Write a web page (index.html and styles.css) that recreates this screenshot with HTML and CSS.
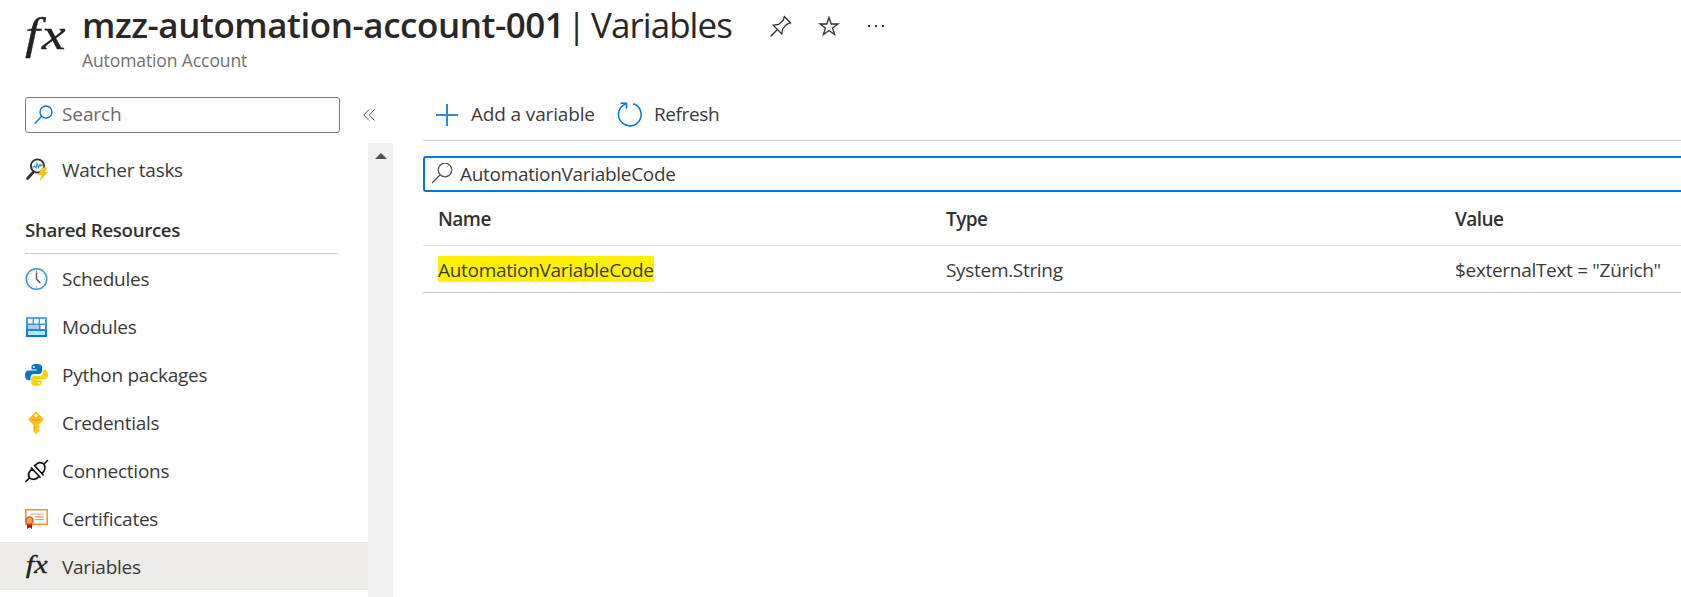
FILE: index.html
```html
<!DOCTYPE html>
<html lang="en">
<head>
<meta charset="utf-8">
<title>mzz-automation-account-001 | Variables</title>
<link rel="stylesheet" href="styles.css">
</head>
<body>
<header class="header">
  <svg class="header-icon" viewBox="0 0 46 46"><text class="fx fx-large" transform="translate(2 35) scale(1.220 1)">fx</text></svg>
  <div class="headings">
    <div class="title-row">
      <h1 class="title"><span class="title-name">mzz-automation-account-001</span><span class="title-bar">|</span><span class="title-page">Variables</span></h1>
      <div class="title-actions">
        <svg width="24" height="24" viewBox="0 0 24 24" fill="none" stroke="#323130" stroke-width="1.3"><path d="M1.500 22.500 8 16M14.800 2 22 9.200M15.500 2.800 14 6.500 9.500 10.500 4.200 11.300 12.800 20 13.700 14.700 17.700 10.300 21.500 8.800Z"/></svg>
        <svg width="24" height="24" viewBox="0 0 24 24" fill="none" stroke="#323130" stroke-width="1.3"><path d="M12 3.500 14.200 10H21L15.500 13.900 17.600 20.500 12 16.500 6.400 20.500 8.500 13.900 3 10H9.800Z"/></svg>
        <svg width="24" height="24" viewBox="0 0 24 24" fill="#323130"><path d="M3 11h2v2H3zM10 11h2v2h-2zM17 11h2v2h-2z"/></svg>
      </div>
    </div>
    <div class="subtitle">Automation Account</div>
  </div>
</header>
<div class="body">
  <aside class="sidebar">
    <div class="search-row">
      <div class="search">
        <svg width="20" height="20" viewBox="0 0 20 20" fill="none" stroke="#0078d4" stroke-width="1.4"><circle cx="12" cy="7" r="6"/><path d="M7.700 11.300 .8 18.500"/></svg>
        <span>Search</span>
      </div>
      <svg class="collapse" width="12" height="12" viewBox="0 0 12 12" fill="none" stroke="#555" stroke-width="1"><path d="M6 .5.8 6 6 11.500M11.500.5 6.300 6l5.200 5.500"/></svg>
    </div>
    <div class="nav-wrap">
      <nav class="nav">
        <a class="item"><svg class="icon" viewBox="0 0 24 24"><path d="M3.500 21.500 9 15.500" stroke="#323130" stroke-width="2.800" stroke-linecap="round"/><circle cx="13.500" cy="9" r="6.700" fill="#eef7fc" stroke="#323130" stroke-width="1.800"/><path d="M8.500 10.500 10.500 9 12 11 13 6.500 14.500 10.500 16 7.500 17 9 18.500 7.500" fill="none" stroke="#2b8ccc" stroke-width="1.100"/><path d="M18 10.500h5.500L20.500 15H24l-8.500 9.300 2-6.300H14Z" fill="#fdc50f"/></svg><span>Watcher tasks</span></a>
        <h2 class="group">Shared Resources</h2>
        <a class="item"><svg class="icon" viewBox="0 0 24 24"><circle cx="12.500" cy="13" r="10.300" fill="#fff" stroke="#3d94e0" stroke-width="1.500"/><path d="M12.500 4.500v1.600M12.500 20v1.600M4 13h1.600M19.500 13H21M6.500 7l1 1M18.500 7l-1 1M6.500 19l1-1" stroke="#999" stroke-width=".9"/><path d="M12.500 6.500V13l3.800 4" fill="none" stroke="#555" stroke-width="1.400"/></svg><span>Schedules</span></a>
        <a class="item"><svg class="icon" viewBox="0 0 24 24"><defs><linearGradient id="mod" x2="0" y2="1"><stop stop-color="#5ea0ef"/><stop offset="1" stop-color="#0078d4"/></linearGradient></defs><path d="M2 3h21v20H2z" fill="url(#mod)"/><path d="M4 5h4.500v4.500H4zM10 5h4.500v4.500H10zM16 5h5v4.500h-5zM16.500 11H21v4h-4.500z" fill="#fff"/><path d="M4 11h11v4H4z" fill="#a9cdf5"/><path d="M4 17h17v4H4z" fill="#b5e3fa"/></svg><span>Modules</span></a>
        <a class="item"><svg class="icon" viewBox="0 0 24 24"><path d="M12.400 2C8.500 2 7.500 3.300 7.500 5v2.500h5.300v1H4.600C2.300 8.500 1 10.400 1 13.200s1.300 5 3.200 5h2.300v-2.700c0-2 1.600-3.500 3.500-3.500h5.200c1.700 0 2.800-1.300 2.800-2.900V5c0-1.800-1.500-3-5.600-3Z" fill="#0078c8"/><path d="M12.600 24c3.900 0 5-1.300 5-3v-2.500h-5.300v-1h8.200c2.300 0 3.500-1.900 3.500-4.700s-1.300-5-3.200-5h-2v2.900c0 2-1.600 3.300-3.500 3.300h-5.200c-1.700 0-2.800 1.300-2.800 2.900V21c0 1.800 1.200 3 5.300 3Z" fill="#fdd215"/><circle cx="9.800" cy="4.900" r="1" fill="#fff"/><circle cx="15.200" cy="21.100" r="1" fill="#fff"/></svg><span>Python packages</span></a>
        <a class="item"><svg class="icon" viewBox="0 0 24 24"><defs><linearGradient id="key" x2="0" y2="1"><stop stop-color="#feb41b"/><stop offset="1" stop-color="#ffd015"/></linearGradient></defs><path d="M10.800 2.500a1.600 1.600 0 0 1 2.400 0L18.700 8a2 2 0 0 1 0 2.700L14.600 15l1 1v1.500l-1 1 1 1v1.300L12.500 24h-1L9.300 21.700V15L5.300 10.700a2 2 0 0 1 0-2.700Z" fill="url(#key)"/><circle cx="12" cy="5.500" r="1.600" fill="#fff"/><path d="M7.500 9.200h9v1.300h-9z" fill="#f29a10"/><path d="M10.600 15.500v5.500" stroke="#f2a510" stroke-width=".9"/></svg><span>Credentials</span></a>
        <a class="item"><svg class="icon" viewBox="0 0 24 24" fill="none" stroke="#111" stroke-width="1.700" stroke-linecap="round"><path d="M2 23.300 5.500 20M20 6l3.500-3.500M7.500 10l8.500 9.300M10.500 7.500l8.500 9.300M8.300 11c-3.500 2.300-5 5-2.800 9 4 2.300 7.500 1.500 9.500-2M11 8C13.500 4 16.500 3.700 20 6c2 4 .8 7-2 9.500"/></svg><span>Connections</span></a>
        <a class="item"><svg class="icon" viewBox="0 0 24 24"><path d="M1.800 3.800h21.400v14.400H1.800z" fill="#fff" stroke="#eb9330" stroke-width="1.500"/><path d="M6 8h14M11 10.800h9M11 13.500h9" stroke="#eda066" stroke-width="1.200"/><path d="M3 16h5v7l-2.500-1.500L3 23Z" fill="#b5161b"/><circle cx="5.500" cy="14.500" r="3.600" fill="#fba63a" stroke="#e8583a" stroke-width="1.500"/></svg><span>Certificates</span></a>
        <a class="item selected"><svg class="icon" viewBox="0 0 24 24"><text class="fx fx-small" transform="translate(1.800 19) scale(1.220 1)">fx</text></svg><span>Variables</span></a>
      </nav>
      <div class="scrollbar"><svg width="12" height="6" viewBox="0 0 12 6"><path d="M0 6 6 0l6 6Z" fill="#505050"/></svg></div>
    </div>
  </aside>
  <main class="main">
    <div class="toolbar">
      <svg width="24" height="24" viewBox="0 0 24 24" stroke="#2b8bda" stroke-width="2"><path d="M12 1v22M1 12h22"/></svg>
      <span class="add">Add a variable</span>
      <svg width="26" height="26" viewBox="0 0 26 26" fill="none" stroke="#0078d4" stroke-width="1.500"><path d="M16.300 1.800A11.300 11.300 0 1 1 6.500 3.200L9.500 1.300M3.500 1.300h6v5.500"/></svg>
      <span class="refresh">Refresh</span>
    </div>
    <div class="filter">
      <svg width="22" height="22" viewBox="0 0 22 22" fill="none" stroke="#555" stroke-width="1.300"><circle cx="14" cy="7" r="6.800"/><path d="M9.200 11.800 1 20"/></svg>
      <span>AutomationVariableCode</span>
    </div>
    <div class="row head"><span>Name</span><span>Type</span><span>Value</span></div>
    <div class="row data"><span><mark>AutomationVariableCode</mark></span><span>System.String</span><span>$externalText = "Zürich"</span></div>
  </main>
</div>
</body>
</html>
```
FILE: styles.css
```css
* { box-sizing: border-box; }
body {
  margin: 0;
  height: 597px;
  overflow: hidden;
  background: #fff;
  color: #3b3a39;
  font: 400 19px/26px "Open Sans", "Noto Sans", sans-serif;
  letter-spacing: -.31px;
}
svg { display: block; flex: none; }
h1, h2 { margin: 0; }

.fx { font-family: "Liberation Serif", serif; font-style: italic; font-weight: 400; fill: #222; stroke: #222; stroke-width: .3px; }
.fx-large { font-size: 44px; letter-spacing: 1.500px; }
.fx-small { font-size: 25px; letter-spacing: 0; }

.header { display: flex; height: 97px; padding: 0 0 0 23px; }
.header-icon { width: 46px; height: 46px; margin-top: 14px; overflow: visible; }
.headings { padding-left: 13px; }
.title-row { display: flex; height: 50px; align-items: center; }
.title { display: flex; font-size: 35px; line-height: 50px; font-weight: 400; white-space: nowrap; color: #292827; }
.title-name { width: 485px; font-weight: 600; letter-spacing: -.45px; }
.title-bar { width: 24px; letter-spacing: 0; }
.title-page { width: 178px; letter-spacing: -.95px; }
.title-actions { display: flex; gap: 24px; padding-top: 2px; }
.subtitle { margin-top: -2px; font-size: 17.500px; line-height: 24px; color: #72706e; letter-spacing: -.1px; }

.body { display: flex; height: 500px; }
.sidebar { display: flex; flex-direction: column; width: 393px; }
.search-row { display: flex; align-items: center; height: 36px; padding-left: 25px; gap: 23px; margin-bottom: 10px; }
.search { display: flex; align-items: center; width: 315px; height: 36px; padding-left: 8px; gap: 8px; border: 1px solid #7a7876; border-radius: 3px; color: #6b6967; letter-spacing: -.1px; }
.search span { padding-bottom: 2px; }
.nav-wrap { display: flex; flex: 1; }
.nav { width: 368px; padding-top: 2px; letter-spacing: -.27px; }
.item { display: flex; align-items: center; height: 48px; padding-left: 24px; gap: 14px; }
.icon { width: 24px; height: 24px; overflow: visible; }
.item span { padding-top: 1px; }
.selected { background: #edebe9; }
.group { width: 313px; height: 61px; margin-left: 25px; padding-top: 24px; border-bottom: 1px solid #c8c8c8; color: #323130; font-size: 18.700px; font-weight: 600; letter-spacing: -.35px; }
.scrollbar { display: flex; justify-content: center; width: 25px; padding-top: 10px; background: #f0f0f0; }

.main { flex: 1; padding-left: 30px; }
.toolbar { display: flex; align-items: center; height: 44px; padding: 0 0 8px 12px; border-bottom: 1px solid #d2d0ce; white-space: nowrap; letter-spacing: -.15px; }
.toolbar span { padding-bottom: 2px; }
.add { width: 158px; padding-left: 12px; }
.refresh { padding-left: 11px; letter-spacing: -.4px; }
.filter { display: flex; align-items: center; height: 36px; margin: 15px -4px 0 0; padding-left: 6px; gap: 7px; border: 2.500px solid #0078d4; border-radius: 3px; }
.row { display: grid; grid-template-columns: 508px 509px 1fr; padding-left: 15px; white-space: nowrap; }
.head { height: 54px; padding-top: 14px; border-bottom: 1px solid #e8e8e8; color: #323130; font-weight: 600; letter-spacing: -.55px; }
.data { height: 47px; padding-top: 10px; border-bottom: 1px solid #c8c6c4; }
.data span { line-height: 28px; }
mark { display: inline-block; height: 26px; line-height: 28px; background: #fff100; color: inherit; }
```
